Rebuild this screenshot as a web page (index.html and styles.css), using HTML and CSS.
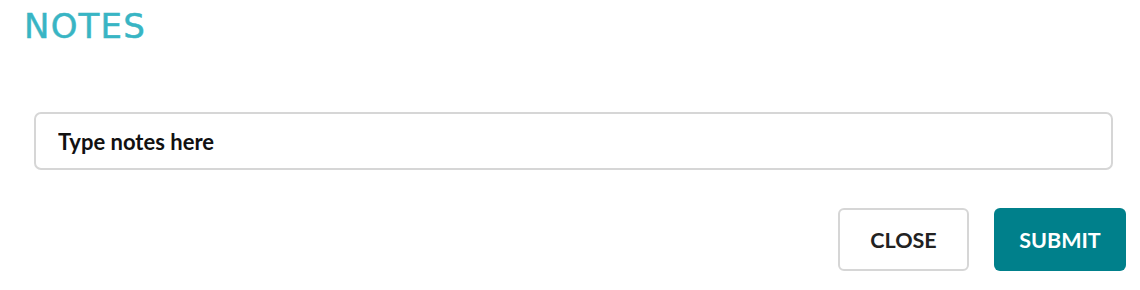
FILE: index.html
```html
<!DOCTYPE html>
<html>
<head>
<meta charset="utf-8">
<link rel="stylesheet" href="styles.css">
</head>
<body>
<div class="panel">
  <h1 class="title">NOTES</h1>
  <div class="field">
    <input class="notes" type="text" placeholder="Type notes here">
  </div>
  <div class="actions">
    <button class="btn btn-close">CLOSE</button>
    <button class="btn btn-submit">SUBMIT</button>
  </div>
</div>
</body>
</html>
```
FILE: styles.css
```css
html, body {
  margin: 0;
  padding: 0;
  background: #ffffff;
}
.panel {
  width: 1140px;
  height: 290px;
  box-sizing: border-box;
  font-family: "Lato", "Liberation Sans", sans-serif;
}
.title {
  margin: 7px 0 0 0;
  padding-left: 24px;
  font-family: "DejaVu Sans", sans-serif;
  font-weight: 400;
  font-size: 34px;
  line-height: 38px;
  letter-spacing: 1.2px;
  color: #38b5c4;
  -webkit-text-stroke: 0.5px #38b5c4;
}
.field {
  margin-top: 67px;
  padding: 0 27px 0 34px;
}
.notes {
  display: block;
  width: 100%;
  height: 58px;
  box-sizing: border-box;
  border: 2px solid #d6d6d6;
  border-radius: 7px;
  padding: 0 22px;
  font-family: "Lato", sans-serif;
  font-weight: 700;
  font-size: 22px;
  color: #111;
  outline: none;
}
.notes::placeholder {
  color: #111;
  opacity: 1;
}
.actions {
  display: flex;
  justify-content: flex-end;
  gap: 25px;
  margin-top: 38px;
  padding-right: 14px;
}
.btn {
  height: 63px;
  box-sizing: border-box;
  border-radius: 6px;
  font-family: "Lato", sans-serif;
  font-weight: 700;
  font-size: 21.5px;
  cursor: pointer;
}
.btn-close {
  width: 131px;
  background: #ffffff;
  border: 2px solid #d6d6d6;
  color: #222;
}
.btn-submit {
  width: 132px;
  background: #00808b;
  border: none;
  color: #ffffff;
}
```
